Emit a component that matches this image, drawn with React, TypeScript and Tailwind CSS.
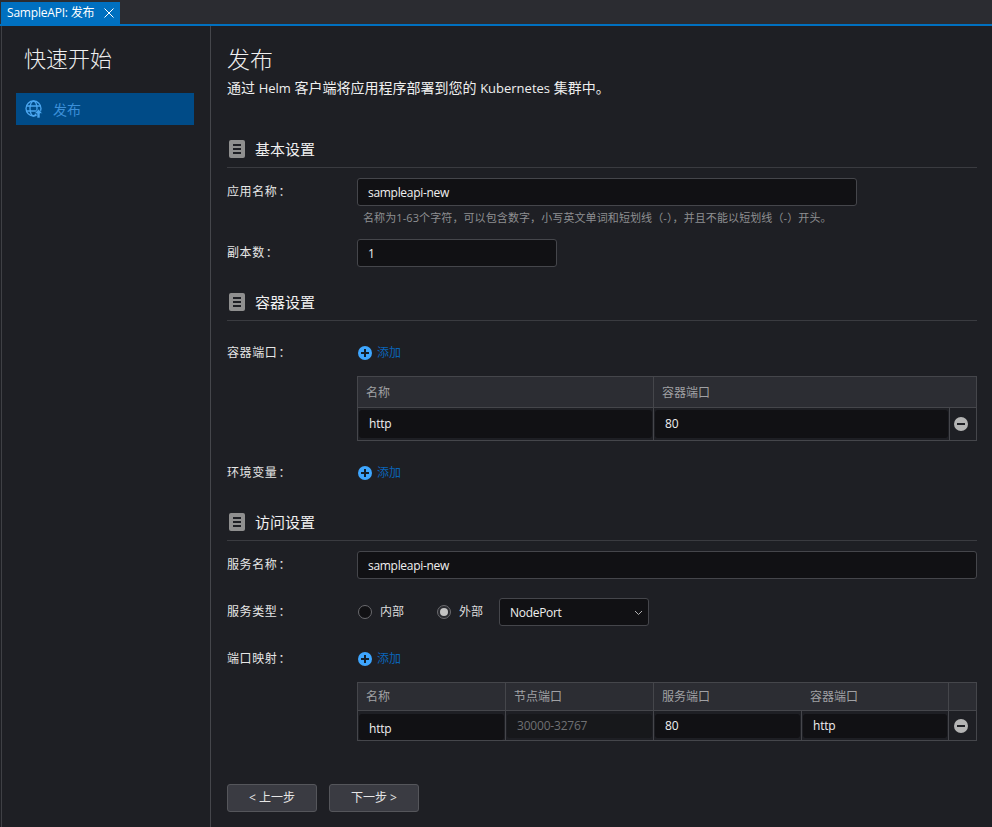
import React from "react";

function DocIcon() {
  return (
    <svg width="16" height="18" viewBox="0 0 16 18" className="shrink-0">
      <rect x="0" y="0" width="16" height="18" rx="2" fill="#8f8f8f" />
      <rect x="4" y="4" width="8" height="2" fill="#1e1f24" />
      <rect x="4" y="8" width="8" height="2" fill="#1e1f24" />
      <rect x="4" y="12" width="8" height="2" fill="#1e1f24" />
    </svg>
  );
}

function Section({ title, className }: { title: string; className: string }) {
  return (
    <div className={`flex items-center h-[29px] border-b border-[#3a3b40] ${className}`}>
      <div className="ml-[2px] mb-[8px] flex items-center gap-[10px]">
        <DocIcon />
        <span className="text-[15px] leading-[18px] text-[#f0f0f0]">{title}</span>
      </div>
    </div>
  );
}

function Label({ children }: { children: React.ReactNode }) {
  return (
    <div className="w-[130px] shrink-0 text-[12px] leading-[16px] tracking-[0.6px] text-[#e6e6e6]">
      {children}
      <span className="ml-[1px]">：</span>
    </div>
  );
}

function Input({ value, className }: { value: string; className: string }) {
  return (
    <div className={`h-[28px] rounded-[3px] border border-[#45464b] bg-[#111114] pl-[10px] pt-[1px] flex items-center text-[12px] tracking-[-0.3px] text-[#f0f0f0] ${className}`}>
      {value}
    </div>
  );
}

function Add() {
  return (
    <div className="ml-[1px] flex items-center gap-[5px]">
      <svg width="14" height="14" viewBox="0 0 14 14">
        <circle cx="7" cy="7" r="7" fill="#3ea6ff" />
        <rect x="3" y="6" width="8" height="2" fill="#14202c" />
        <rect x="6" y="3" width="2" height="8" fill="#14202c" />
      </svg>
      <span className="text-[12px] leading-[16px] text-[#0a64b8]">添加</span>
    </div>
  );
}

function Minus() {
  return (
    <svg width="14" height="14" viewBox="0 0 14 14" className="mr-[4px]">
      <circle cx="7" cy="7" r="7" fill="#b4b4b4" />
      <rect x="3" y="6" width="8" height="2" fill="#1e1f24" />
    </svg>
  );
}

function Cell({ value, muted, className }: { value: string; muted?: boolean; className: string }) {
  return (
    <div className={`mx-[1px] rounded-[3px] pl-[10px] flex items-center text-[12px] tracking-[-0.2px] ${muted ? "bg-[#17181b] text-[#6f7073]" : "bg-[#111114] text-[#f0f0f0]"} ${className}`}>
      {value}
    </div>
  );
}

function Radio({ checked, label, className }: { checked?: boolean; label: string; className: string }) {
  return (
    <div className={`flex items-center ${className}`}>
      <div className={`w-[14px] h-[14px] rounded-full border border-[#6a6a6e] flex items-center justify-center ${checked ? "bg-[#2a2b30]" : "bg-[#111114]"}`}>
        {checked && <div className="w-[8px] h-[8px] rounded-full bg-[#c4c4c4]" />}
      </div>
      <span className="text-[12px] text-[#dcdcdc]">{label}</span>
    </div>
  );
}

const headCell = "bg-[#2c2d33] border-b border-[#45464b] pl-[8px] flex items-center text-[12px] text-[#a0a1a4]";

export default function App() {
  return (
    <div className="w-[992px] h-[827px] overflow-hidden flex flex-col bg-[#1e1f24] text-white">
      <style>{`body{font-family:"Open Sans","Noto Sans CJK SC",sans-serif}`}</style>
      <div className="h-[26px] shrink-0 bg-[#2b2c31] border-b-[2px] border-[#0070c0] flex items-end pl-[1px]">
        <div className="h-[22px] w-[119px] bg-[#0070c0] flex items-center pl-[6px] gap-[10px]">
          <span className="text-[12px] tracking-[-0.2px] text-white whitespace-nowrap">SampleAPI: 发布</span>
          <svg width="10" height="10" viewBox="0 0 10 10" stroke="#ffffff" strokeWidth="1" fill="none">
            <path d="M0.5 0.5 L9.5 9.5 M9.5 0.5 L0.5 9.5" />
          </svg>
        </div>
      </div>
      <div className="flex-1 flex border-l border-[#3f4045] ml-[1px]">
        <aside className="w-[209px] shrink-0 border-r border-[#45464b] pl-[14px] pr-[16px]">
          <div className="mt-[17px] pl-[8px] text-[22px] font-light leading-[30px] text-[#efefef]">快速开始</div>
          <div className="mt-[20px] h-[32px] bg-[#004b87] flex items-center pl-[9px] gap-[10px]">
            <svg width="18" height="18" viewBox="0 0 18 18" fill="none" stroke="#4aa6f0" strokeWidth="1.3">
              <circle cx="8.5" cy="8.5" r="7.5" />
              <ellipse cx="8.5" cy="8.5" rx="3.5" ry="7.5" />
              <path d="M1.2 6 H15.8 M1.2 11 H11" />
              <path d="M9.5 13.5 L13.5 9 L17.5 13.5 H15 V18 H12 V13.5 Z" fill="#4aa6f0" stroke="#004b87" strokeWidth="0.6" />
            </svg>
            <span className="text-[14px] text-[#3b8fd8]">发布</span>
          </div>
        </aside>
        <main className="flex-1 pl-[16px] pr-[15px] flex flex-col">
          <div className="mt-[18px] text-[23px] font-light leading-[30px] text-[#efefef]">发布</div>
          <div className="mt-[4px] text-[14px] leading-[20px] text-[#efefef] whitespace-nowrap">
            通过 <span className="text-[13px]">Helm</span> 客户端将应用程序部署到您的 <span className="text-[13px]">Kubernetes</span> 集群中。
          </div>

          <Section title="基本设置" className="mt-[41px]" />
          <div className="mt-[10px] flex">
            <div className="pt-[6px]"><Label>应用名称</Label></div>
            <Input value="sampleapi-new" className="w-[500px]" />
          </div>
          <div className="mt-[4px] ml-[136px] text-[11px] leading-[16px] tracking-[0.1px] text-[#8e8f92] whitespace-nowrap">
            名称为1-63个字符，可以包含数字，小写英文单词和短划线（-），并且不能以短划线（-）开头。
          </div>
          <div className="mt-[13px] flex items-center">
            <Label>副本数</Label>
            <Input value="1" className="w-[200px]" />
          </div>

          <Section title="容器设置" className="mt-[25px]" />
          <div className="mt-[24px] flex items-center h-[16px]">
            <Label>容器端口</Label>
            <Add />
          </div>
          <div className="mt-[15px] ml-[130px] border border-[#45464b] grid grid-cols-[296px_296px_1fr]">
            <div className={`h-[31px] pt-[1px] border-r ${headCell}`}>名称</div>
            <div className={`col-span-2 h-[31px] pt-[1px] ${headCell}`}>容器端口</div>
            <div className="border-r border-[#45464b] h-[32px] pt-[2px]"><Cell value="http" className="h-[28px]" /></div>
            <div className="border-r border-[#45464b] h-[32px] pt-[2px]"><Cell value="80" className="h-[28px]" /></div>
            <div className="flex items-center justify-center"><Minus /></div>
          </div>
          <div className="mt-[24px] flex items-center h-[16px]">
            <Label>环境变量</Label>
            <Add />
          </div>

          <Section title="访问设置" className="mt-[31px]" />
          <div className="mt-[10px] flex">
            <div className="pt-[6px]"><Label>服务名称</Label></div>
            <Input value="sampleapi-new" className="flex-1" />
          </div>
          <div className="mt-[19px] flex items-center">
            <Label>服务类型</Label>
            <Radio label="内部" className="ml-[1px] gap-[8px]" />
            <Radio checked label="外部" className="ml-[33px] gap-[8px]" />
            <div className="ml-[16px] w-[150px] h-[28px] rounded-[3px] border border-[#45464b] bg-[#111114] pl-[10px] pr-[5px] pt-[1px] flex items-center justify-between text-[12px] tracking-[-0.3px] text-[#f0f0f0]">
              NodePort
              <svg width="9" height="6" viewBox="0 0 9 6" fill="none" stroke="#b0b0b0"><path d="M1 1 L4.5 4.5 L8 1" /></svg>
            </div>
          </div>
          <div className="mt-[25px] flex items-center h-[16px]">
            <Label>端口映射</Label>
            <Add />
          </div>
          <div className="mt-[15px] ml-[130px] border-t border-x border-[#45464b] grid grid-cols-[148px_148px_148px_147px_1fr]">
            <div className={`h-[28px] border-r ${headCell}`}>名称</div>
            <div className={`h-[28px] border-r ${headCell}`}>节点端口</div>
            <div className={`h-[28px] ${headCell}`}>服务端口</div>
            <div className={`h-[28px] border-r ${headCell}`}>容器端口</div>
            <div className={`h-[28px] ${headCell}`} />
            <div className="border-r border-b border-[#45464b] h-[30px] pt-[3px]"><Cell value="http" className="h-[26px] pt-[3px]" /></div>
            <div className="border-r border-b border-[#45464b] h-[30px] pt-[3px]"><Cell value="30000-32767" muted className="h-[24px]" /></div>
            <div className="border-r border-b border-[#45464b] h-[30px] pt-[3px]"><Cell value="80" className="h-[24px]" /></div>
            <div className="border-r border-b border-[#45464b] h-[30px] pt-[3px]"><Cell value="http" className="h-[24px]" /></div>
            <div className="border-b border-[#45464b] h-[30px] flex items-center justify-center"><Minus /></div>
          </div>
          <div className="mt-[43px] flex gap-[12px]">
            <div className="w-[90px] h-[28px] rounded-[3px] border border-[#55565b] bg-[#3a3b42] flex items-center justify-center text-[12px] text-[#e6e6e6]">&lt; 上一步</div>
            <div className="w-[90px] h-[28px] rounded-[3px] border border-[#55565b] bg-[#3a3b42] flex items-center justify-center text-[12px] text-[#e6e6e6]">下一步 &gt;</div>
          </div>
        </main>
      </div>
    </div>
  );
}
